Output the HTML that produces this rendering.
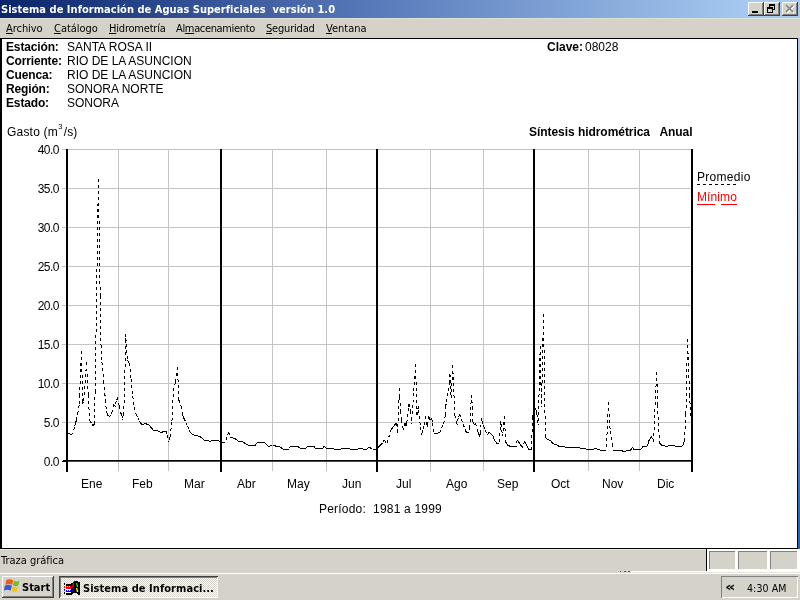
<!DOCTYPE html>
<html lang="es">
<head>
<meta charset="utf-8">
<title>Sistema de Información de Aguas Superficiales versión 1.0</title>
<style>
html,body{margin:0;padding:0;}
body{width:800px;height:600px;overflow:hidden;background:#d5d2ca;position:relative;
 font-family:"Liberation Sans","DejaVu Sans",sans-serif;font-size:12px;color:#000;}
.abs{position:absolute;white-space:pre;will-change:transform;}
.tah{font-family:"DejaVu Sans Condensed","DejaVu Sans","Liberation Sans",sans-serif;}
#title{left:0;top:0;width:800px;height:18px;background:linear-gradient(90deg,#0a246a 0%,#5a7cbc 48%,#a6caf0 94%,#a6caf0 100%);}
#titletxt{left:1.3px;letter-spacing:0.03px;top:2px;color:#fff;font-weight:bold;font-size:11px;line-height:15px;}
#menu{left:0;top:18px;width:800px;height:20px;background:#d5d2ca;border-top:1px solid #e2dfd6;box-sizing:border-box;}
.mi{top:22px;font-size:11px;line-height:14px;letter-spacing:-0.2px;}
.mi u{text-decoration:underline;}
#content{left:0;top:38px;width:798px;height:511px;background:#000;}
#white{left:2px;top:39px;width:795px;height:509px;background:#fff;}
#redge{left:798px;top:38px;width:2px;height:511px;background:linear-gradient(180deg,#b4c6e6 0%,#9db5dc 50%,#2a62b4 95%);}
.b{font-weight:bold;}
.lb{letter-spacing:-0.15px;}
.row{font-size:12px;line-height:14px;}
.yl{left:19.5px;width:39px;text-align:right;letter-spacing:-0.5px;}
.cb{width:16px;height:14px;top:2px;background:#d5d2ca;box-shadow:inset -1px -1px 0 #404040,inset 1px 1px 0 #fff,inset -2px -2px 0 #808080;}
#status{left:0;top:549px;width:800px;height:24px;background:#d5d2ca;}
.sp{top:551px;height:18px;background:#d5d2ca;box-shadow:inset 1px 1px 0 #808080;}
#taskbar{left:0;top:573px;width:800px;height:27px;background:#d5d2ca;border-top:1px solid #fff;box-sizing:border-box;}
.btn{box-shadow:inset -1px -1px 0 #404040,inset 1px 1px 0 #fff,inset -2px -2px 0 #808080;background:#d5d2ca;}
.btnp{box-shadow:inset 1px 1px 0 #404040,inset -1px -1px 0 #fff,inset 2px 2px 0 #808080;
 background-color:#fff;background-image:linear-gradient(45deg,#d5d2ca 25%,transparent 25%,transparent 75%,#d5d2ca 75%),linear-gradient(45deg,#d5d2ca 25%,transparent 25%,transparent 75%,#d5d2ca 75%);background-size:2px 2px;background-position:0 0,1px 1px;}
</style>
</head>
<body>
<div id="title" class="abs"></div>
<div id="titletxt" class="abs tah">Sistema de Información de Aguas Superficiales  versión 1.0</div>
<div class="abs cb" style="left:748px;"></div>
<div class="abs cb" style="left:764px;"></div>
<div class="abs cb" style="left:782px;"></div>
<svg class="abs" style="left:748px;top:2px;" width="50" height="14" viewBox="0 0 50 14" shape-rendering="crispEdges">
<rect x="4" y="9" width="6" height="2" fill="#000"/>
<rect x="21" y="2" width="6" height="6" fill="#000"/><rect x="22" y="4" width="4" height="3" fill="#d5d2ca"/><rect x="19" y="5" width="6" height="6" fill="#000"/><rect x="20" y="7" width="4" height="3" fill="#d5d2ca"/>
<path d="M39 4l7 7M46 4l-7 7" stroke="#fff" stroke-width="1.6" shape-rendering="auto"/>
<path d="M38 3l7 7M45 3l-7 7" stroke="#808080" stroke-width="1.6" shape-rendering="auto"/>
</svg>

<div id="menu" class="abs"></div>
<div class="abs mi tah" style="left:6px;letter-spacing:-0.05px;"><u>A</u>rchivo</div>
<div class="abs mi tah" style="left:54px;letter-spacing:-0.05px;"><u>C</u>atálogo</div>
<div class="abs mi tah" style="left:108.5px;"><u>H</u>idrometría</div>
<div class="abs mi tah" style="left:175.5px;letter-spacing:-0.35px;">Al<u>m</u>acenamiento</div>
<div class="abs mi tah" style="left:266px;"><u>S</u>eguridad</div>
<div class="abs mi tah" style="left:326px;letter-spacing:0;"><u>V</u>entana</div>

<div id="content" class="abs"></div>
<div id="white" class="abs"></div>
<div id="redge" class="abs"></div>

<div class="abs row b lb" style="left:6px;top:40px;">Estación:</div>
<div class="abs row" style="left:67px;top:40px;">SANTA ROSA II</div>
<div class="abs row b lb" style="left:6px;top:54px;">Corriente:</div>
<div class="abs row" style="left:67px;top:54px;">RIO DE LA ASUNCION</div>
<div class="abs row b lb" style="left:6px;top:68px;">Cuenca:</div>
<div class="abs row" style="left:67px;top:68px;">RIO DE LA ASUNCION</div>
<div class="abs row b lb" style="left:6px;top:82px;">Región:</div>
<div class="abs row" style="left:67px;top:82px;">SONORA NORTE</div>
<div class="abs row b lb" style="left:6px;top:96px;">Estado:</div>
<div class="abs row" style="left:67px;top:96px;">SONORA</div>
<div class="abs row b" style="left:547px;top:40px;">Clave:</div>
<div class="abs row" style="left:585px;top:40px;">08028</div>

<div class="abs row" style="left:7px;top:125px;letter-spacing:0.2px;">Gasto (m<span style="font-size:7.5px;position:relative;top:-7px;margin:0 1px 0 0.3px;">3</span>/s)</div>
<div class="abs row b" style="left:529px;top:125px;letter-spacing:-0.05px;">Síntesis hidrométrica   Anual</div>

<!--CHART-->
<svg class="abs" style="left:0;top:0;" width="800" height="600" viewBox="0 0 800 600" shape-rendering="crispEdges">
<path d="M62 149.5H692M62 188.5H692M62 227.5H692M62 266.5H692M62 305.5H692M62 344.5H692M62 383.5H692M62 422.5H692M118.5 149V471M168.5 149V471M272.5 149V471M326.5 149V471M430.5 149V471M483.5 149V471M588.5 149V471M639.5 149V471" stroke="#c4c4c4" stroke-width="1" fill="none"/>
<path d="M67.5 433.5L69.4 433.9M69.4 433.9L71.1 434.2M71.1 434.2L72.5 434.5M72.8 433.3L72.5 434.5M74.5 427.1L72.8 433.3M75.7 423.0L74.5 427.1M76.3 420.2L75.7 423.0M78.0 411.6L76.3 420.2M79.3 405.0L78.0 411.6M79.7 395.1L79.3 405.0M81.4 351.0L79.7 395.1M81.4 351.0L82.8 404.0M83.1 401.9L82.8 404.0M84.6 392.0L83.1 401.9M86.5 362.5L84.6 392.0M86.5 362.5L88.2 394.9M88.2 394.9L89.6 420.0M89.6 420.0L90.0 420.7M90.0 420.7L91.7 423.7M91.7 423.7L93.2 426.5M94.6 423.0L93.2 426.5M95.1 391.1L94.6 423.0M96.8 281.1L95.1 391.1M98.4 179.0L96.8 281.1M98.4 179.0L100.2 296.1M100.2 296.1L101.0 345.0M101.0 345.0L101.9 362.0M101.9 362.0L103.7 381.2M103.7 381.2L105.4 399.8M105.4 399.8L106.4 411.0M106.4 411.0L107.1 413.5M107.1 413.5L107.5 415.0M107.5 415.0L108.8 416.0M108.8 416.0L109.4 416.5M110.5 415.4L109.4 416.5M111.2 414.6L110.5 415.4M112.2 410.9L111.2 414.6M113.9 404.5L112.2 410.9M113.9 404.5L115.4 406.8M116.1 401.0L115.4 406.8M117.6 397.4L116.1 401.0M117.6 397.4L119.1 405.7M119.1 405.7L120.2 412.4M120.2 412.4L120.8 413.2M120.8 413.2L121.8 414.6M121.8 414.6L122.4 419.5M123.6 412.8L122.4 419.5M124.4 400.0L123.6 412.8M125.6 334.0L124.4 400.0M125.6 334.0L125.9 338.4M125.9 338.4L127.5 360.0M127.5 360.0L129.4 363.0M129.4 363.0L131.1 379.3M131.1 379.3L132.8 396.1M132.8 396.1L133.4 402.2M133.4 402.2L134.5 407.2M134.5 407.2L136.0 414.2M136.0 414.2L137.9 417.9M137.9 417.9L139.6 421.1M139.6 421.1L140.6 423.0M140.6 423.0L141.3 423.8M141.3 423.8L142.5 425.0M142.5 425.0L143.0 424.6M143.0 424.6L145.0 423.0M145.0 423.0L146.5 424.1M146.5 424.1L146.9 424.4M146.9 424.4L148.2 424.4M148.2 424.4L148.8 424.4M148.8 424.4L149.9 425.9M149.9 425.9L151.6 428.1M151.6 428.1L153.1 430.0M153.1 430.0L155.0 430.1M155.0 430.1L156.9 430.2M156.9 430.2L158.5 431.2M158.5 431.2L160.2 432.3M160.2 432.3L161.2 433.0M161.2 433.0L161.9 432.4M161.9 432.4L163.1 431.2M163.1 431.2L163.6 431.2M163.6 431.2L165.3 431.2M165.3 431.2L166.2 431.2M166.2 431.2L167.0 435.1M167.0 435.1L168.5 442.5M170.0 437.5L168.5 442.5M170.4 434.0L170.0 437.5M171.9 422.5L170.4 434.0M173.6 388.0L171.9 422.5M175.6 382.5L173.6 388.0M177.5 367.0L175.6 382.5M177.5 367.0L178.8 400.0M178.8 400.0L180.7 404.9M180.7 404.9L181.2 406.2M181.2 406.2L182.4 412.6M182.4 412.6L183.1 416.2M183.1 416.2L184.1 418.6M184.1 418.6L185.9 422.5M185.9 422.5L187.6 426.4M187.6 426.4L189.3 430.3M189.3 430.3L190.0 431.9M190.0 431.9L191.0 432.9M191.0 432.9L192.5 434.4M192.5 434.4L194.4 435.0M194.4 435.0L196.1 435.5M196.1 435.5L197.8 436.0M197.8 436.0L199.5 436.6M199.5 436.6L200.6 436.9M200.6 436.9L201.3 437.6M201.3 437.6L203.0 439.2M203.0 439.2L203.8 440.0M203.8 440.0L204.7 440.2M204.7 440.2L206.4 440.5M206.4 440.5L208.1 440.9M208.1 440.9L210.0 441.2M210.0 441.2L211.5 441.0M211.5 441.0L213.2 440.7M213.2 440.7L215.0 440.4M215.0 440.4L216.7 440.1M216.7 440.1L217.5 440.0M217.5 440.0L218.4 440.7M218.4 440.7L220.1 442.1M220.1 442.1L220.6 442.5M220.6 442.5L221.8 442.4M221.8 442.4L223.5 442.3M223.5 442.3L225.2 442.2M226.9 437.0L225.2 442.2M228.5 432.2L226.9 437.0M228.5 432.2L230.6 437.2M230.6 437.2L232.1 437.7M232.1 437.7L233.8 438.2M233.8 438.2L235.0 438.5M235.0 438.5L235.5 438.9M235.5 438.9L237.2 440.2M237.2 440.2L238.5 441.2M238.5 441.2L238.9 441.3M238.9 441.3L240.6 441.4M240.6 441.4L241.9 441.5M241.9 441.5L242.4 441.8M242.4 441.8L244.1 442.7M244.1 442.7L245.8 443.7M245.8 443.7L247.5 444.7M247.5 444.7L248.1 445.0M248.1 445.0L249.2 445.1M249.2 445.1L250.9 445.2M250.9 445.2L252.6 445.4M252.6 445.4L254.3 445.5M254.3 445.5L255.0 445.6M256.1 444.2L255.0 445.6M257.5 442.2L256.1 444.2M257.5 442.2L259.5 442.2M259.5 442.2L261.2 442.2M261.2 442.2L262.9 442.2M262.9 442.2L263.8 442.2M263.8 442.2L264.6 442.8M264.6 442.8L266.2 443.8M266.2 443.8L268.1 446.2M268.1 446.2L269.8 446.0M269.8 446.0L271.5 445.8M271.5 445.8L272.5 445.6M272.5 445.6L273.2 445.7M273.2 445.7L274.9 445.9M274.9 445.9L276.6 446.2M276.6 446.2L278.3 446.4M278.3 446.4L278.8 446.5M278.8 446.5L280.0 447.2M280.0 447.2L281.7 448.2M281.7 448.2L283.8 449.4M283.8 449.4L285.2 449.4M285.2 449.4L286.9 449.4M286.9 449.4L288.1 449.4M288.6 448.8L288.1 449.4M290.6 446.2L288.6 448.8M290.6 446.2L292.0 446.2M292.0 446.2L293.7 446.2M293.7 446.2L295.4 446.2M295.4 446.2L297.2 446.2M297.2 446.2L297.5 446.2M297.5 446.2L298.9 447.2M298.9 447.2L300.6 448.5M300.6 448.5L302.3 448.5M302.3 448.5L304.0 448.5M304.0 448.5L305.6 448.5M307.5 446.2L305.6 448.5M307.5 446.2L309.1 446.2M309.1 446.2L310.9 446.2M310.9 446.2L312.6 446.2M312.6 446.2L313.8 446.2M313.8 446.2L314.3 446.9M314.3 446.9L315.6 448.5M315.6 448.5L316.0 448.5M316.0 448.5L317.7 448.5M317.7 448.5L319.4 448.5M319.4 448.5L321.1 448.5M321.1 448.5L322.5 448.5M322.8 448.1L322.5 448.5M324.4 446.2L322.8 448.1M324.4 446.2L326.2 448.1M326.2 448.1L328.0 448.2M328.0 448.2L329.7 448.3M329.7 448.3L331.4 448.4M331.4 448.4L332.5 448.5M332.5 448.5L333.1 448.7M333.1 448.7L335.0 449.4M335.0 449.4L336.5 449.4M336.5 449.4L338.2 449.4M338.2 449.4L340.0 449.4M340.0 449.4L340.6 449.4M340.6 449.4L341.7 448.8M341.7 448.8L343.1 448.1M343.1 448.1L345.1 448.1M345.1 448.1L346.8 448.1M346.8 448.1L348.1 448.1M348.1 448.1L348.5 448.3M348.5 448.3L350.2 449.0M350.2 449.0L351.2 449.4M351.2 449.4L351.9 449.4M351.9 449.4L353.7 449.4M353.7 449.4L355.4 449.4M355.4 449.4L357.1 449.4M357.1 449.4L357.5 449.4M357.5 449.4L358.8 448.7M358.8 448.7L360.0 448.1M360.0 448.1L360.5 448.3M360.5 448.3L362.2 448.8M362.2 448.8L363.9 449.3M363.9 449.3L364.4 449.4M364.4 449.4L365.6 449.2M365.6 449.2L366.9 449.0M366.9 449.0L367.4 448.6M367.4 448.6L369.0 447.1M369.0 447.1L370.8 448.3M370.8 448.3L372.5 449.4M372.5 449.4L374.2 449.4M374.2 449.4L375.9 449.4M375.9 449.4L376.2 449.4M377.6 448.0L376.2 449.4M379.3 446.3L377.6 448.0M381.1 444.6L379.3 446.3M382.5 443.1L381.1 444.6M384.4 440.0L382.5 443.1M384.4 440.0L386.2 443.8M386.2 443.8L386.5 444.5M387.9 440.0L386.5 444.5M389.6 434.6L387.9 440.0M391.2 429.4L389.6 434.6M393.0 427.1L391.2 429.4M394.8 424.8L393.0 427.1M395.6 423.8L394.8 424.8M395.6 423.8L396.5 423.2M396.5 423.2L396.8 423.0M396.8 423.0L397.5 435.0M398.2 418.2L397.5 435.0M399.4 388.0L398.2 418.2M399.4 388.0L399.9 397.4M399.9 397.4L400.6 411.0M400.6 411.0L401.5 420.0M401.5 420.0L403.5 430.0M405.0 423.0L403.5 430.0M405.0 423.0L406.2 428.0M406.7 423.5L406.2 428.0M408.5 407.8L406.7 423.5M408.9 403.8L408.5 407.8M408.9 403.8L410.2 409.3M410.2 409.3L410.6 411.2M410.6 411.2L411.5 423.8M411.9 418.3L411.5 423.8M413.6 393.5L411.9 418.3M415.6 364.4L413.6 393.5M415.6 364.4L416.9 417.5M418.3 406.2L416.9 417.5M418.3 406.2L418.7 410.4M418.7 410.4L420.4 427.1M420.4 427.1L421.2 435.0M422.2 432.6L421.2 435.0M423.1 430.0L422.2 432.6M423.9 425.8L423.1 430.0M425.6 416.2L423.9 425.8M425.6 416.2L426.9 427.5M427.3 424.8L426.9 427.5M428.5 416.2L427.3 424.8M428.5 416.2L429.0 417.5M429.0 417.5L430.0 420.0M430.0 420.0L430.7 419.5M430.7 419.5L431.9 418.8M431.9 418.8L432.4 423.0M432.4 423.0L433.8 433.8M433.8 433.8L434.1 433.8M434.1 433.8L435.9 433.8M435.9 433.8L436.2 433.8M436.2 433.8L437.6 433.3M437.6 433.3L439.3 432.6M439.3 432.6L440.2 432.2M441.0 430.2L440.2 432.2M442.7 425.4L441.0 430.2M444.3 421.0L442.7 425.4M445.5 415.0L444.3 421.0M445.8 406.0L445.5 415.0M446.1 403.9L445.8 406.0M447.8 392.8L446.1 403.9M449.5 382.0L447.8 392.8M450.0 374.5L449.5 382.0M450.0 374.5L451.2 398.5M452.7 364.8L451.2 398.5M452.7 364.8L454.8 415.0M454.8 415.0L456.4 421.5M456.4 421.5L457.2 424.8M458.2 418.0L457.2 424.8M459.8 414.2L458.2 418.0M459.8 414.2L461.5 419.4M461.5 419.4L463.2 424.3M463.2 424.3L465.0 429.2M465.0 429.2L465.8 431.5M465.8 431.5L466.7 432.1M466.7 432.1L468.0 433.0M468.4 431.7L468.0 433.0M469.8 427.0L468.4 431.7M471.4 395.0L469.8 427.0M471.4 395.0L471.8 399.7M471.8 399.7L472.5 407.5M472.5 407.5L472.7 421.0M472.7 421.0L473.8 425.6M475.2 423.5L473.8 425.6M475.6 423.0L475.2 423.5M475.6 423.0L476.9 428.7M476.9 428.7L477.5 431.0M477.5 431.0L478.7 433.8M478.7 433.8L480.0 437.0M480.4 432.4L480.0 437.0M481.5 418.5L480.4 432.4M481.5 418.5L482.1 420.9M482.1 420.9L483.1 425.0M483.1 425.0L483.8 426.6M483.8 426.6L485.5 430.5M485.5 430.5L487.5 435.0M488.8 432.0L487.5 435.0M488.8 432.0L490.6 433.7M490.6 433.7L492.4 435.2M492.4 435.2L492.8 435.6M492.8 435.6L493.8 438.8M493.8 438.8L494.1 439.3M494.1 439.3L495.8 442.0M495.8 442.0L496.9 443.8M496.9 443.8L497.5 443.6M497.5 443.6L499.4 443.0M500.6 421.2L499.4 443.0M500.6 421.2L500.9 423.7M500.9 423.7L502.5 436.0M504.4 416.2L502.5 436.0M504.4 416.2L505.6 442.0M505.6 442.0L506.1 442.7M506.1 442.7L507.5 445.0M507.5 445.0L509.5 446.0M509.5 446.0L510.0 446.2M510.0 446.2L511.2 446.4M511.2 446.4L512.9 446.6M512.9 446.6L514.6 446.8M514.6 446.8L516.2 447.0M517.2 440.0L516.2 447.0M517.2 440.0L518.0 441.2M518.0 441.2L519.8 443.8M519.8 443.8L521.5 446.4M521.5 446.4L522.5 448.0M523.2 445.6L522.5 448.0M524.4 441.2L523.2 445.6M524.4 441.2L524.9 442.2M524.9 442.2L526.6 445.4M526.6 445.4L528.3 448.6M528.3 448.6L528.8 449.4M528.8 449.4L530.0 449.4M530.0 449.4L531.5 449.4M532.5 417.5L531.5 449.4M533.8 408.8L532.5 417.5M533.8 408.8L535.0 408.0M535.0 408.0L536.5 411.0M536.5 411.0L536.9 413.9M536.9 413.9L538.3 425.0M540.2 346.0L538.3 425.0M540.2 346.0L541.5 407.0M542.0 383.0L541.5 407.0M543.5 314.0L542.0 383.0M543.5 314.0L545.3 436.0M545.3 436.0L546.7 439.2M546.7 439.2L547.2 439.4M547.2 439.4L548.9 440.0M548.9 440.0L550.6 440.6M550.6 440.6L552.3 442.7M552.3 442.7L553.1 443.8M553.1 443.8L554.0 444.0M554.0 444.0L555.7 444.4M555.7 444.4L556.9 444.8M556.9 444.8L557.4 445.2M557.4 445.2L558.8 446.2M558.8 446.2L559.1 446.3M559.1 446.3L560.9 446.5M560.9 446.5L562.6 446.7M562.6 446.7L564.3 446.9M564.3 446.9L566.0 447.1M566.0 447.1L567.7 447.3M567.7 447.3L569.4 447.5M569.4 447.5L571.1 447.7M571.1 447.7L571.9 447.8M571.9 447.8L572.8 447.8M572.8 447.8L574.5 447.8M574.5 447.8L576.3 447.9M576.3 447.9L578.0 447.9M578.0 447.9L579.7 448.0M579.7 448.0L581.4 448.0M581.4 448.0L583.1 448.0M583.1 448.0L585.0 448.1M585.0 448.1L586.5 449.2M586.5 449.2L586.9 449.4M586.9 449.4L588.2 449.4M588.2 449.4L590.0 449.4M590.0 449.4L591.7 449.4M591.7 449.4L593.1 449.4M593.1 449.4L595.0 448.1M595.0 448.1L596.8 448.8M596.8 448.8L598.5 449.4M598.5 449.4L600.0 450.0M600.0 450.0L601.9 450.1M601.9 450.1L603.7 450.1M603.7 450.1L605.4 450.2M605.4 450.2L606.2 450.2M607.1 432.4L606.2 450.2M608.5 402.0L607.1 432.4M608.5 402.0L610.2 431.2M610.2 431.2L612.2 444.2M612.2 444.2L613.1 450.0M613.1 450.0L613.9 450.1M613.9 450.1L615.6 450.2M615.6 450.2L617.4 450.3M617.4 450.3L619.1 450.4M619.1 450.4L620.8 450.6M620.8 450.6L621.2 450.6M621.2 450.6L622.5 451.0M622.5 451.0L623.8 451.5M623.8 451.5L624.2 451.4M624.2 451.4L625.9 451.0M625.9 451.0L627.6 450.7M627.6 450.7L629.3 450.3M629.3 450.3L630.6 450.0M631.1 449.3L630.6 450.0M632.4 447.3L631.1 449.3M632.4 447.3L632.8 447.8M632.8 447.8L633.9 449.2M633.9 449.2L634.5 449.2M634.5 449.2L636.2 449.2M636.2 449.2L637.9 449.3M637.9 449.3L639.6 449.3M639.6 449.3L641.0 449.3M641.3 448.8L641.0 449.3M643.0 446.4L641.3 448.8M643.0 446.4L644.5 447.0M644.5 447.0L646.0 446.2M646.0 446.2L646.5 446.3M646.5 446.3L647.5 446.5M648.2 443.1L647.5 446.5M648.5 441.5L648.2 443.1M649.9 439.2L648.5 441.5M651.5 436.5L649.9 439.2M651.5 436.5L653.5 442.5M655.0 408.6L653.5 442.5M656.7 371.6L655.0 408.6M656.7 371.6L657.5 405.0M657.5 405.0L658.5 423.1M658.5 423.1L659.5 443.0M659.5 443.0L660.2 443.7M660.2 443.7L661.5 445.0M661.5 445.0L661.9 445.1M661.9 445.1L663.6 445.6M663.6 445.6L665.3 446.0M665.3 446.0L667.0 446.5M667.0 446.5L668.7 445.9M668.7 445.9L670.0 445.5M670.0 445.5L670.4 445.5M670.4 445.5L672.2 445.7M672.2 445.7L673.9 445.9M673.9 445.9L675.6 446.1M675.6 446.1L677.3 446.3M677.3 446.3L679.0 446.5M679.0 446.5L680.7 446.2M680.7 446.2L682.0 446.0M682.0 446.0L682.4 445.6M682.4 445.6L683.5 444.5M684.3 441.0L683.5 444.5M685.9 414.0L684.3 441.0M687.5 339.0L685.9 414.0M687.5 339.0L689.5 395.0M689.5 395.0L691.2 422.0" stroke="#000" stroke-width="1" fill="none" stroke-dasharray="3 3"/>
<path d="M63 460.5H692M62 461.5H67" stroke="#000" stroke-width="1"/>
<path d="M67 461.5H692" stroke="#f00" stroke-width="1"/>
<path d="M67 149V472M221 149V472M377 149V472M534 149V472M692 149V472" stroke="#000" stroke-width="2"/>
<path d="M697 184.5H737" stroke="#000" stroke-dasharray="3 3"/>
<path d="M697 204.5H715M721 204.5H737" stroke="#f00"/>
</svg>
<div class="abs row yl" style="top:143px;">40.0</div>
<div class="abs row yl" style="top:182px;">35.0</div>
<div class="abs row yl" style="top:221px;">30.0</div>
<div class="abs row yl" style="top:260px;">25.0</div>
<div class="abs row yl" style="top:299px;">20.0</div>
<div class="abs row yl" style="top:338px;">15.0</div>
<div class="abs row yl" style="top:377px;">10.0</div>
<div class="abs row yl" style="top:416px;">5.0</div>
<div class="abs row yl" style="top:455px;">0.0</div>
<div class="abs row" style="left:81px;top:477px;">Ene</div>
<div class="abs row" style="left:132px;top:477px;">Feb</div>
<div class="abs row" style="left:184px;top:477px;">Mar</div>
<div class="abs row" style="left:237px;top:477px;">Abr</div>
<div class="abs row" style="left:287px;top:477px;">May</div>
<div class="abs row" style="left:342px;top:477px;">Jun</div>
<div class="abs row" style="left:396px;top:477px;">Jul</div>
<div class="abs row" style="left:446px;top:477px;">Ago</div>
<div class="abs row" style="left:497px;top:477px;">Sep</div>
<div class="abs row" style="left:551px;top:477px;">Oct</div>
<div class="abs row" style="left:602px;top:477px;">Nov</div>
<div class="abs row" style="left:657px;top:477px;">Dic</div>
<div class="abs row" style="left:697px;top:170px;letter-spacing:0.3px;">Promedio</div>
<div class="abs row" style="left:697px;top:190px;color:#f00;letter-spacing:0.1px;">Mínimo</div>
<!--/CHART-->

<div class="abs row" style="left:319px;top:502px;letter-spacing:0.2px;">Período:  1981 a 1999</div>

<div id="status" class="abs"></div>
<div class="abs tah" style="left:1px;top:554px;font-size:11px;line-height:14px;">Traza gráfica</div>
<div class="abs" style="left:0;top:549px;width:706px;height:1px;background:#ebe9e4;"></div>
<div class="abs" style="left:631px;top:571px;width:169px;height:1px;background:#fff;"></div>
<div class="abs" style="left:631px;top:572px;width:169px;height:1px;background:#e6e4de;"></div>
<div class="abs" style="left:620px;top:571px;width:10px;height:1px;background:linear-gradient(90deg,#555 0,#555 1.5px,transparent 1.5px,transparent 4.2px,#555 4.2px,#555 5.7px,transparent 5.7px,transparent 8.4px,#555 8.4px,#555 10px);"></div>
<div class="abs" style="left:707px;top:549px;width:93px;height:22px;background:#fff;"></div>
<div class="abs" style="left:706px;top:549px;width:1px;height:22px;background:#000;"></div>
<div class="abs sp" style="left:709px;width:26px;"></div>
<div class="abs sp" style="left:738px;width:29px;"></div>
<div class="abs sp" style="left:770px;width:27px;"></div>

<div id="taskbar" class="abs"></div>
<div class="abs btn" style="left:2px;top:576px;width:52px;height:22px;"></div>
<svg class="abs" style="left:3px;top:578px;" width="18" height="16" viewBox="0 0 18 16">
<g transform="translate(0.7,0.5)"><path d="M2.6 1.6C4.6 0.4 6.8 0.6 9.6 1.8L8.4 6.4C6 5.4 3.8 5.2 1.6 6.4Z" fill="#ee5c1a"/>
<path d="M10.4 2.2C12.4 3.2 14.2 3.2 15.8 2.2L14.6 7C13 8 11.2 7.8 9.2 6.8Z" fill="#68c422"/>
<path d="M1.2 7.2C3.4 6 5.6 6.2 8.2 7.2L7 12C4.8 11 2.4 10.8 0.2 12Z" fill="#3458dc"/>
<path d="M9 7.8C11 8.8 12.8 9 14.4 8L13.2 12.6C11.6 13.6 9.8 13.4 7.8 12.4Z" fill="#f6c414"/></g>
</svg>
<div class="abs tah b" style="left:22px;top:581px;font-size:11px;line-height:14px;">Start</div>
<div class="abs btnp" style="left:59px;top:576px;width:159px;height:22px;"></div>
<svg class="abs" style="left:64px;top:581px;" width="16" height="14" viewBox="0 0 16 14" shape-rendering="crispEdges">
<path d="M7 2h2v-1h1v-1h4v1h2v13h-2v-1h-1v-1h-4v1h-1v1h-1z" fill="#000"/>
<g shape-rendering="auto"><path d="M8.9 2h1.4l-.7 4h-1.6z" fill="#f00"/><path d="M12 2h1.3l1 4h-1.5z" fill="#0e0"/>
<path d="M8.9 7h1.4l-.7 4h-1.6z" fill="#00f"/><path d="M12 7h1.3l1 4h-1.5z" fill="#ff0"/></g>
<rect x="2" y="3" width="5" height="2" fill="#000"/><rect x="2" y="12" width="5" height="2" fill="#000"/>
<rect x="2" y="5" width="5" height="3" fill="#f00"/><rect x="2" y="9" width="5" height="2" fill="#00f"/>
<rect x="2" y="8" width="5" height="1" fill="#fff"/><rect x="2" y="11" width="5" height="1" fill="#fff"/>
<rect x="3" y="5" width="1" height="1" fill="#fff"/><rect x="5" y="5" width="1" height="1" fill="#fff"/><rect x="3" y="9" width="1" height="1" fill="#fff"/><rect x="5" y="9" width="1" height="1" fill="#fff"/>
<rect x="0" y="2" width="1" height="2" fill="#000"/><rect x="0" y="5" width="1" height="2" fill="#f00"/><rect x="0" y="8" width="1" height="2" fill="#00f"/><rect x="0" y="11" width="1" height="2" fill="#000"/>
</svg>
<div class="abs tah b" style="left:82.5px;top:582px;font-size:11px;line-height:14px;letter-spacing:0.05px;">Sistema de Informaci...</div>
<div class="abs" style="left:721px;top:576px;width:77px;height:22px;box-shadow:inset 1px 1px 0 #808080,inset -1px -1px 0 #fff;"></div>
<div class="abs b" id="chev" style="left:725px;top:578px;font-family:'DejaVu Sans',sans-serif;font-size:13px;line-height:18px;transform:scaleX(1.25);transform-origin:0 0;">«</div>
<div class="abs tah" style="left:747px;top:581px;font-size:10.5px;line-height:14px;letter-spacing:0.1px;">4:30 AM</div>
</body>
</html>
